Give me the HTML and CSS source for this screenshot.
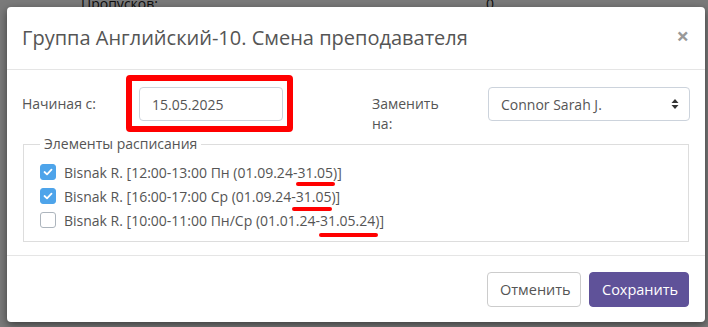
FILE: index.html
```html
<!DOCTYPE html>
<html lang="ru">
<head>
<meta charset="utf-8">
<title>Смена преподавателя</title>
<link rel="stylesheet" href="styles.css">
</head>
<body>
<div class="page">
  <div class="page-row"><span class="page-label">Пропусков:</span><span class="page-value">0</span></div>
</div>
<div class="backdrop"></div>
<div class="modal">
  <div class="modal-header">
    <h4 class="modal-title">Группа Английский-10. Смена преподавателя</h4>
    <span class="close">×</span>
  </div>
  <div class="modal-body">
    <div class="form-row">
      <label class="control-label">Начиная с:</label>
      <div class="input-wrap">
        <input class="form-control" type="text" value="15.05.2025">
      </div>
      <span></span>
      <label class="control-label narrow">Заменить на:</label>
      <div class="select">
        <span>Connor Sarah J.</span>
        <svg class="caret" width="8" height="12" viewBox="0 0 8 12"><path d="M4 1 L7.5 5 H0.5 Z M4 11 L7.5 7 H0.5 Z" fill="#333"/></svg>
      </div>
    </div>
    <fieldset class="items">
      <legend>Элементы расписания</legend>
      <label class="check-row"><span class="box checked"><svg width="10" height="8" viewBox="0 0 10 8"><path d="M1.5 4 L4 6.3 L8.5 1.6" fill="none" stroke="#fff" stroke-width="1.8" stroke-linecap="round" stroke-linejoin="round"/></svg></span><span>Bisnak R. [12:00-13:00 Пн (01.09.24-<span class="mark m1">31.05)</span>]</span></label>
      <label class="check-row"><span class="box checked"><svg width="10" height="8" viewBox="0 0 10 8"><path d="M1.5 4 L4 6.3 L8.5 1.6" fill="none" stroke="#fff" stroke-width="1.8" stroke-linecap="round" stroke-linejoin="round"/></svg></span><span>Bisnak R. [16:00-17:00 Ср (01.09.24-<span class="mark m2">31.05)</span>]</span></label>
      <label class="check-row"><span class="box"></span><span>Bisnak R. [10:00-11:00 Пн/Ср (01.01.24-<span class="mark m3">31.05.24)</span>]</span></label>
    </fieldset>
  </div>
  <div class="modal-footer">
    <button class="btn btn-default">Отменить</button>
    <button class="btn btn-primary">Сохранить</button>
  </div>
</div>
</body>
</html>
```
FILE: styles.css
```css
* { box-sizing: border-box; }
html, body {
  margin: 0;
  width: 708px;
  height: 327px;
  overflow: hidden;
}
body {
  position: relative;
  background: #fff;
  font-family: "Open Sans", "Noto Sans", sans-serif;
  font-size: 14px;
  color: #555;
}
.page-row {
  display: flex;
  height: 14px;
  line-height: 8px;
  font-size: 14px;
  color: #222;
  overflow: hidden;
  padding-left: 81px;
}
.page-label { width: 405px; }
.backdrop {
  position: absolute;
  inset: 0;
  background: rgba(0, 0, 0, 0.52);
}
.modal {
  position: absolute;
  left: 7px;
  top: 7px;
  width: 698px;
  height: 315px;
  background: #fff;
  border-radius: 4px;
  box-shadow: 0 3px 9px rgba(0, 0, 0, 0.5);
  display: flex;
  flex-direction: column;
}
.modal-header {
  height: 63px;
  flex: none;
  border-bottom: 1px solid #e5e5e5;
  display: flex;
  align-items: center;
  justify-content: space-between;
  padding: 0 16px 1px 15px;
}
.modal-title {
  margin: 0;
  font-size: 20px;
  font-weight: 400;
  color: #555;
}
.close {
  font-size: 22px;
  font-weight: 700;
  color: #999;
  line-height: 1;
  margin-top: -6px;
}
.modal-body {
  padding: 17px 15px 0 15px;
  flex: 1;
}
.form-row {
  display: grid;
  grid-template-columns: 117px 144px 1fr 116px 202px;
  align-items: start;
}
.control-label {
  padding-top: 7px;
  line-height: 20px;
  color: #555;
}
.control-label.narrow { width: 80px; }
.input-wrap {
  position: relative;
}
.input-wrap::after {
  content: "";
  position: absolute;
  left: -13px;
  top: -12px;
  right: -10px;
  bottom: -11px;
  border: 6px solid #ff0000;
  border-radius: 4px;
  pointer-events: none;
}
.form-control {
  display: block;
  width: 144px;
  height: 34px;
  border: 1px solid #ccd3dc;
  border-radius: 4px;
  padding: 6px 12px;
  font-family: inherit;
  font-size: 14px;
  color: #555;
  background: #fff;
}
.select {
  height: 34px;
  border: 1px solid #ccd3dc;
  border-radius: 4px;
  padding: 0 10px 0 12px;
  display: flex;
  align-items: center;
  justify-content: space-between;
  color: #555;
}
.caret { display: block; }
.items {
  margin: 0 0 0 1px;
  padding: 6px 16px 9px 16px;
  border: 1px solid #ddd;
  width: 666px;
}
.items legend {
  padding: 0 4px;
  color: #555;
  line-height: 20px;
}
.check-row {
  display: flex;
  align-items: center;
  height: 24px;
  gap: 8px;
}
.box {
  width: 16px;
  height: 16px;
  border: 1px solid #adb5bd;
  border-radius: 3px;
  display: flex;
  align-items: center;
  justify-content: center;
  background: #fff;
  flex: none;
}
.box.checked {
  background: #4ea4ea;
  border-color: #4ea4ea;
}
.mark {
  position: relative;
}
.mark::after {
  content: "";
  position: absolute;
  height: 4px;
  background: #ff0000;
  border-radius: 2px;
}
.m1::after { left: -1px; right: 2px; bottom: -4px; }
.m2::after { left: -4px; right: 4px; bottom: -5px; }
.m3::after { left: -1px; right: 1px; bottom: -7px; }
.modal-footer {
  border-top: 1px solid #e5e5e5;
  height: 67px;
  flex: none;
  display: flex;
  align-items: center;
  justify-content: flex-end;
  gap: 8px;
  padding: 0 16px 0 0;
}
.btn {
  height: 35px;
  border-radius: 4px;
  font-family: inherit;
  font-size: 14.5px;
  padding: 0 12px;
  border: 1px solid #ccc;
}
.btn-default {
  background: #fff;
  color: #555;
  width: 94px;
}
.btn-primary {
  background: #5f5299;
  border-color: #5f5299;
  color: #fff;
  width: 100px;
}
```
